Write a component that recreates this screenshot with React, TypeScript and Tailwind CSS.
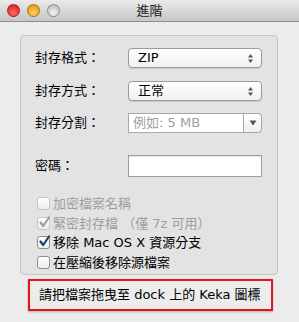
import React from "react"

const font = { fontFamily: '"DejaVu Sans", "Noto Sans CJK TC", sans-serif' }

function Light({ color }: { color: string }) {
  return (
    <span
      className="h-[13px] w-[13px] rounded-full border border-black/30"
      style={{ background: color }}
    />
  )
}

function UpDown() {
  return (
    <svg width="7" height="11" viewBox="0 0 7 11" className="shrink-0">
      <path d="M3.5 1 L6 4.5 L1 4.5 Z" fill="#555" />
      <path d="M3.5 10 L6 6.5 L1 6.5 Z" fill="#555" />
    </svg>
  )
}

function Popup({ value }: { value: string }) {
  return (
    <div className="flex h-[20px] w-[134px] items-center justify-between rounded-[4px] border border-[#9b9b9b] bg-gradient-to-b from-white to-[#f1f1f1] pl-[9px] pr-[7px] shadow-[0_1px_1px_rgba(0,0,0,0.12)]">
      <span className="text-[13px] text-black">{value}</span>
      <UpDown />
    </div>
  )
}

function Check({ checked, disabled, label }: { checked?: boolean; disabled?: boolean; label: string }) {
  return (
    <div className="flex h-[19.5px] items-center gap-[3px]">
      <span
        className={`flex h-[13px] w-[13px] items-center justify-center rounded-[3px] border bg-gradient-to-b from-white to-[#ededed] ${
          disabled ? "border-[#c4c4c4]" : "border-[#8d8d8d]"
        }`}
      >
        {checked && (
          <svg width="13" height="13" viewBox="0 0 13 13" className="-mt-[2px] ml-[1px] shrink-0">
            <path
              d="M2.5 6.5 L5.2 10 L11 1.5"
              fill="none"
              stroke={disabled ? "#9c9c9c" : "#1f3f7a"}
              strokeWidth="2.2"
              strokeLinecap="round"
              strokeLinejoin="round"
            />
          </svg>
        )}
      </span>
      <span className={`text-[13px] ${disabled ? "text-[#9e9e9e]" : "text-black"}`}>{label}</span>
    </div>
  )
}

export default function App() {
  return (
    <div className="h-[322px] w-[299px] overflow-hidden bg-[#ececec]" style={font}>
      {/* title bar */}
      <div className="relative flex h-[22px] items-center border-b border-[#8e8e8e] bg-gradient-to-b from-[#ebebeb] to-[#c6c6c6] pl-[7px]">
        <div className="flex gap-[7px]">
          <Light color="radial-gradient(circle at 50% 70%, #ff6a5f, #d3141d)" />
          <Light color="radial-gradient(circle at 50% 70%, #ffd35c, #e08f06)" />
          <Light color="radial-gradient(circle at 50% 70%, #f2f2f2, #b5b5b5)" />
        </div>
        <span className="absolute left-0 right-0 text-center text-[13px] text-[#222]">進階</span>
      </div>

      {/* panel */}
      <div className="ml-[20px] mt-[13px] h-[240px] w-[258px] rounded-[4px] border border-[#c5c5c5] bg-[#e3e3e3] pl-[14px] pr-[15px] pt-[12px]">
        <div className="flex items-center justify-between">
          <span className="text-[13px] text-black">封存格式：</span>
          <Popup value="ZIP" />
        </div>
        <div className="mt-[13px] flex items-center justify-between">
          <span className="text-[13px] text-black">封存方式：</span>
          <Popup value="正常" />
        </div>
        <div className="mt-[12px] flex items-center justify-between">
          <span className="text-[13px] text-black">封存分割：</span>
          <div className="flex h-[20px] w-[134px]">
            <div className="flex flex-1 items-center border border-[#a8a8a8] bg-white pl-[4px] text-[13px] text-[#a0a0a0]">
              例如: 5 MB
            </div>
            <div className="flex w-[18px] items-center justify-center rounded-r-[4px] border border-l-0 border-[#a8a8a8] bg-gradient-to-b from-white to-[#eeeeee]">
              <svg width="8" height="6" viewBox="0 0 8 6">
                <path d="M0.5 0.5 L7.5 0.5 L4 5.5 Z" fill="#555" />
              </svg>
            </div>
          </div>
        </div>
        <div className="mt-[22px] flex items-center justify-between">
          <span className="text-[13px] text-black">密碼：</span>
          <div className="h-[22px] w-[134px] border border-[#9f9f9f] bg-white shadow-[inset_0_1px_1px_rgba(0,0,0,0.12)]" />
        </div>
        <div className="ml-[2px] mt-[17px] flex flex-col">
          <Check disabled label="加密檔案名稱" />
          <Check disabled checked label="緊密封存檔 （僅 7z 可用）" />
          <Check checked label="移除 Mac OS X 資源分支" />
          <Check label="在壓縮後移除源檔案" />
        </div>
      </div>

      {/* drop hint */}
      <div className="ml-[28px] mt-[4px] flex h-[32px] w-[245px] items-center border-2 border-[#e8141b] pl-[9px] shadow-[0_1px_2px_rgba(0,0,0,0.25)]">
        <span className="text-[13px] text-black">請把檔案拖曳至 dock 上的 Keka 圖標</span>
      </div>
    </div>
  )
}
